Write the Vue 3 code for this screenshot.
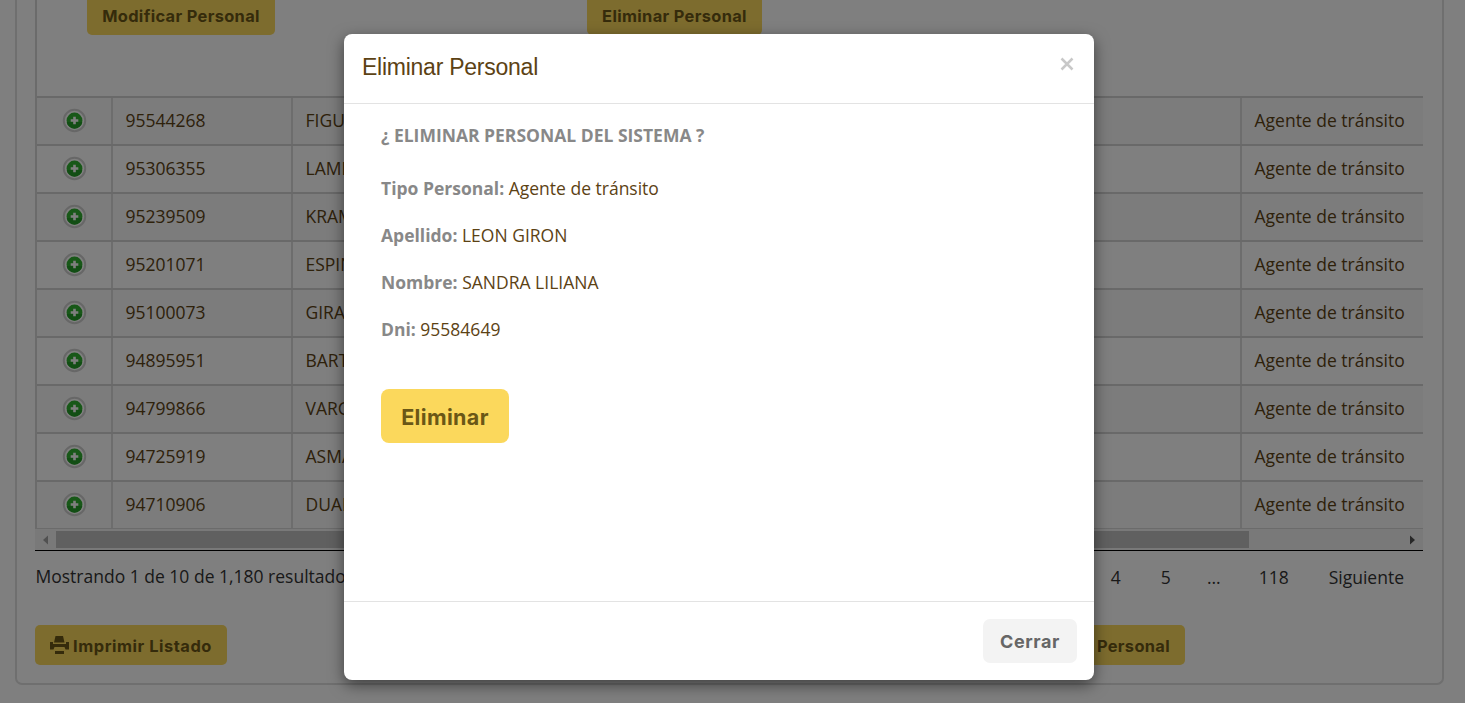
<script setup>
const rows = [
  ['95544268', 'FIGUEROA'],
  ['95306355', 'LAMBERTI'],
  ['95239509', 'KRAMER'],
  ['95201071', 'ESPINOZA'],
  ['95100073', 'GIRALDO'],
  ['94895951', 'BARTOLO'],
  ['94799866', 'VARGAS'],
  ['94725919', 'ASMAD'],
  ['94710906', 'DUARTE'],
]
const fields = [
  ['Tipo Personal:', 'Agente de tránsito'],
  ['Apellido:', 'LEON GIRON'],
  ['Nombre:', 'SANDRA LILIANA'],
  ['Dni:', '95584649'],
]
</script>

<template>
  <div class="page">
    <div class="panel">
      <div class="toolbar">
        <button class="btn modify"><span>Modificar Personal</span></button>
        <button class="btn remove"><span>Eliminar Personal</span></button>
      </div>
      <div class="grid">
        <div v-for="r in rows" :key="r[0]" class="row">
          <div class="cell plus">
            <svg width="25" height="25" viewBox="0 0 25 25">
              <circle cx="12.500" cy="12.500" r="10.700" fill="#fff" stroke="#cfcfcf" stroke-width="2" />
              <circle cx="12.500" cy="12.500" r="7.900" fill="#31b131" />
              <path d="M4.700 14a7.900 7.900 0 0 0 15.600 0z" fill="#249c28" />
              <path d="M12.500 8.700v7.600M8.700 12.500h7.600" stroke="#fff" stroke-width="2.600" />
            </svg>
          </div>
          <div class="cell">{{ r[0] }}</div>
          <div class="cell">{{ r[1] }}</div>
          <div class="cell">Agente de tránsito</div>
        </div>
      </div>
      <div class="scroll">
        <svg width="21" height="18"><path d="M13 4.500v9l-5-4.500z" fill="#a3a3a3" /></svg>
        <div class="thumb"></div>
        <svg class="right" width="21" height="18"><path d="M8 4.500v9l5-4.500z" fill="#505050" /></svg>
      </div>
      <div class="info">
        <span>Mostrando 1 de 10 de 1,180 resultados</span>
        <div class="pages">
          <span class="p4">4</span><span class="p5">5</span><span class="dots">...</span><span class="p118">118</span><span>Siguiente</span>
        </div>
      </div>
      <div class="actions">
        <button class="btn print">
          <svg width="19" height="18" viewBox="0 0 19 18">
            <path d="M5.500 0h7.500l1.500 6.500H4zM0 6h3v2h13V6h3v7.500h-3.500l-1-2.500h-10l-1 2.500H0zM5 15h9v3H5z" fill="#6a5716" />
          </svg>
          <span>Imprimir Listado</span>
        </button>
        <button class="btn add"><span>Personal</span></button>
      </div>
    </div>

    <div class="overlay">
      <div class="modal">
        <div class="head">
          <h4>Eliminar Personal</h4>
          <svg width="14" height="14" viewBox="0 0 14 14"><path d="M1.500 1.500l11 11M12.500 1.500l-11 11" stroke="#c8c8c8" stroke-width="2.500" /></svg>
        </div>
        <div class="body">
          <p class="question"><b>¿ ELIMINAR PERSONAL DEL SISTEMA ?</b></p>
          <p v-for="f in fields" :key="f[0]"><b>{{ f[0] }}</b> {{ f[1] }}</p>
          <button class="btn confirm"><span>Eliminar</span></button>
        </div>
        <div class="foot">
          <button class="btn close"><span>Cerrar</span></button>
        </div>
      </div>
    </div>
  </div>
</template>

<style>
body { margin: 0; overflow: hidden; }
</style>

<style scoped>
* { box-sizing: border-box; }
.page {
  position: relative; height: 703px; overflow: hidden; background: #fff;
  font-family: "Open Sans", sans-serif; font-size: 17.5px; font-weight: 400; color: #5c4214;
}
.panel {
  width: 1429px; height: 687px; margin-left: 15px; margin-top: -2px; padding: 2px 19px 0 19px;
  border: 2px solid #dedede; border-top: 0; border-radius: 0 0 7px 7px;
}
.btn {
  display: flex; align-items: center; justify-content: center; flex: none;
  height: 40px; padding: 2px 0 0; border: 0; border-radius: 5px; background: #fbd85c; color: #6a5716;
  font: 700 16.4px "Inter", "Open Sans", sans-serif; letter-spacing: 0.35px; white-space: nowrap;
}
.toolbar { display: flex; height: 96px; border-left: 2px solid #d6d6d6; margin-left: -1px; }
.toolbar .btn { margin-top: -5px; }
.modify { width: 188px; margin-left: 50px; }
.remove { width: 175px; margin-left: 312px; }
.grid { width: 1388px; margin-left: -1px; border-left: 2px solid #d6d6d6; }
.row { display: grid; grid-template-columns: 74px 180px 949px 183px; height: 48px; border-top: 2px solid #d3d3d3; background: #fefefe; }
.row:nth-child(odd) { background: #f8f8f8; }
.cell { line-height: 44px; padding-left: 12.500px; border-left: 2px solid #dadada; white-space: nowrap; overflow: hidden; }
.cell.plus { display: flex; align-items: center; border-left: 0; padding: 0 0 1px 25px; }
.scroll { display: flex; align-items: center; width: 1388px; height: 23px; margin-left: -1px; border-top: 1px solid #d6d6d6; border-bottom: 1px solid #000; background: #f2f2f2; }
.thumb { width: 1193px; height: 17px; background: #c1c1c1; }
.right { margin-left: auto; }
.info { display: flex; justify-content: space-between; height: 74px; margin-left: -0.500px; color: #333; line-height: 50px; }
.info > span { width: 500px; }
.pages { display: flex; line-height: 52px; margin-right: 19px; }
.p4 { margin-right: 40px; }
.p5 { margin-right: 36px; }
.dots { margin-right: 38px; }
.p118 { margin-right: 40px; }
.actions { display: flex; margin-left: -1px; }
.print { width: 192px; gap: 4px; letter-spacing: 0.55px; }
.print svg { margin-top: -3px; }
.add { width: 120px; margin-left: 838px; justify-content: flex-end; padding-right: 15px; }
.overlay { position: absolute; inset: 0; padding: 34px 0 0 344px; background: rgba(0, 0, 0, 0.5); }
.modal { width: 750px; height: 646px; border-radius: 8px; background: #fff; box-shadow: 0 5px 15px rgba(0, 0, 0, 0.5); }
.head { display: flex; justify-content: space-between; height: 70px; padding: 23px 20px 0 18px; border-bottom: 1px solid #e3e3e3; }
.head h4 { margin: -4px 0 0; font: 400 23px/28px "Liberation Sans", sans-serif; letter-spacing: -0.25px; }
.body { height: 497px; padding: 19px 37px; }
.body p { margin: 0 0 23px; line-height: 24px; }
.body p.question { margin-bottom: 29px; }
b { font-weight: 700; color: #888; }
.confirm { width: 128px; height: 54px; margin-top: 48px; border-radius: 8px; font-size: 21.500px; }
.foot { display: flex; justify-content: flex-end; height: 79px; padding: 17px 17px 0 0; border-top: 1px solid #e3e3e3; }
.close { width: 94px; height: 44px; padding-top: 0; border-radius: 7px; background: #f3f3f3; color: #666; font-size: 18px; letter-spacing: 0.6px; }
</style>
